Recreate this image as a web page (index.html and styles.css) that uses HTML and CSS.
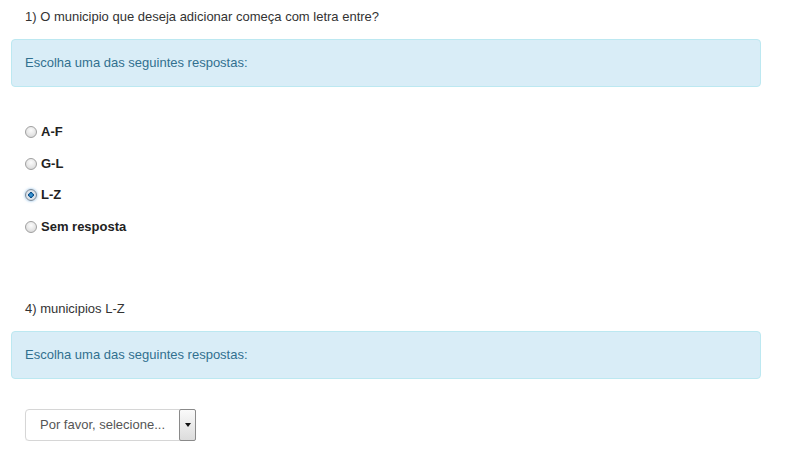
FILE: index.html
```html
<!DOCTYPE html>
<html lang="pt">
<head>
<meta charset="utf-8">
<title>Questionário</title>
<link rel="stylesheet" href="styles.css">
</head>
<body>
<main class="page">
  <section class="question q1">
    <p class="q-text">1) O municipio que deseja adicionar começa com letra entre?</p>
    <div class="alert">Escolha uma das seguintes respostas:</div>
    <ul class="answers">
      <li><label class="answer"><input type="radio" name="q1" class="radio"><span>A-F</span></label></li>
      <li><label class="answer"><input type="radio" name="q1" class="radio"><span>G-L</span></label></li>
      <li><label class="answer"><input type="radio" name="q1" class="radio" checked><span>L-Z</span></label></li>
      <li><label class="answer"><input type="radio" name="q1" class="radio"><span>Sem resposta</span></label></li>
    </ul>
  </section>
  <section class="question q2">
    <p class="q-text">4) municipios L-Z</p>
    <div class="alert">Escolha uma das seguintes respostas:</div>
    <div class="select">
      <span class="select-text">Por favor, selecione...</span>
      <span class="select-btn"><span class="caret"></span></span>
    </div>
  </section>
</main>
</body>
</html>
```

FILE: styles.css
```css
* { box-sizing: border-box; }
html, body { margin: 0; padding: 0; background: #fff; }
body {
  font-family: "Liberation Sans", Arial, sans-serif;
  font-size: 13px;
  line-height: 18px;
  color: #333;
}
.page {
  width: 750px;
  margin-left: 11px;
  display: flex;
  flex-direction: column;
}
.question { display: flex; flex-direction: column; }
.q-text {
  margin: 0;
  padding-left: 14px;
}
.q1 .q-text { margin-top: 8px; }
.q2 .q-text { margin-top: 64px; }
.alert {
  margin-top: 13px;
  background: #d9edf7;
  border: 1px solid #bce8f1;
  border-radius: 4px;
  color: #31708f;
  padding: 14px 13px 14px;
}
.answers {
  list-style: none;
  margin: 36px 0 0 14px;
  padding: 0;
  display: flex;
  flex-direction: column;
  gap: 13.5px;
}
.answer {
  display: flex;
  align-items: center;
  gap: 4px;
  font-weight: bold;
  color: #222;
  cursor: pointer;
}
.radio {
  appearance: none;
  -webkit-appearance: none;
  margin: 0;
  width: 12px;
  height: 12px;
  border-radius: 50%;
  border: 1px solid #a0a0a0;
  background: radial-gradient(circle at 50% 35%, #fcfcfc 0%, #e6e6e6 55%, #cfcfcf 100%);
  flex: none;
}
.radio:checked {
  border-color: #7a8a99;
  background: radial-gradient(circle at 50% 50%, #4fa8e0 0%, #1d6fb0 28%, #0d4d85 36%, #e3e8ee 42%, #c8ced6 100%);
  box-shadow: 0 0 2px 1px rgba(90, 160, 220, 0.35);
}
.select {
  margin: 30px 0 0 14px;
  width: 171px;
  height: 32px;
  display: flex;
  align-items: stretch;
  border: 1px solid #d6d6d6;
  border-radius: 4px;
  background: #fff;
  box-shadow: 0 1px 1px rgba(0,0,0,0.04);
}
.select-text {
  flex: 1;
  display: flex;
  align-items: center;
  padding-left: 14px;
  color: #555;
}
.select-btn {
  width: 17px;
  display: flex;
  align-items: center;
  justify-content: center;
  border: 1px solid #8a8a8a;
  border-radius: 2px;
  background: linear-gradient(#fafafa, #dcdcdc);
  margin: -1px -1px -1px 0;
}
.caret {
  width: 0;
  height: 0;
  border-left: 3.5px solid transparent;
  border-right: 3.5px solid transparent;
  border-top: 4px solid #111;
}
```
